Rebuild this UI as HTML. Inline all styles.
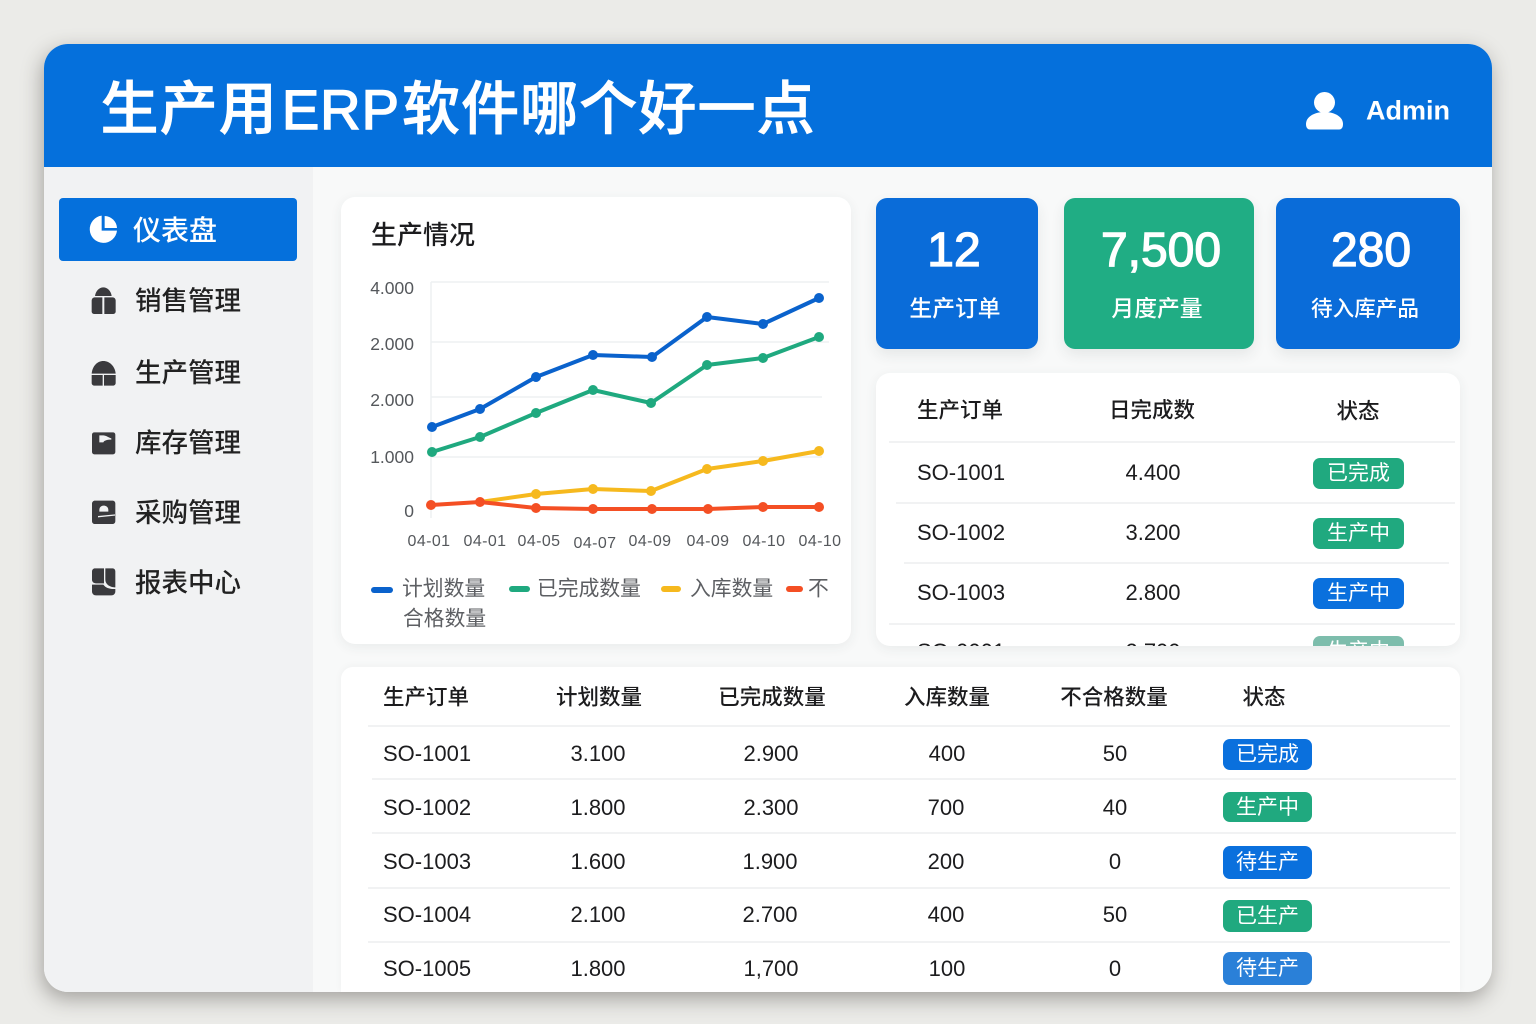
<!DOCTYPE html>
<html lang="zh-CN">
<head>
<meta charset="utf-8">
<title>生产用ERP软件哪个好一点</title>
<style>
html,body{margin:0;padding:0;width:1536px;height:1024px;overflow:hidden;background:#ebebe8}
body{position:relative;font-family:"Liberation Sans","Noto Sans CJK SC",sans-serif;color:#1c1c1e}
div,span{box-sizing:border-box}
.abs{position:absolute}
.c{position:absolute;transform:translate(-50%,-50%);white-space:nowrap;line-height:1}
.l{position:absolute;transform:translateY(-50%);white-space:nowrap;line-height:1}
.panel{position:absolute;background:#fff;border-radius:14px;box-shadow:0 3px 12px rgba(40,50,60,.07)}
.stat{position:absolute;top:198px;height:151px;border-radius:11px;color:#fff;box-shadow:0 6px 14px rgba(40,50,60,.09)}
.nav{font-size:26.500px;color:#222;font-weight:500}
.th{font-size:21.500px;color:#1c1c1e;font-weight:500}
.td{font-size:22px;color:#1c1c1e}
.ln{position:absolute;height:1.500px;background:#f1f2f3}
.b{position:absolute;color:#fff;font-size:21px;line-height:1;border-radius:7px;display:flex;align-items:center;justify-content:center;white-space:nowrap}
.gr{background:#20a97f}
.bl{background:#0a70dd}
.leg{font-size:20.800px;color:#5d5f63}
.val{-webkit-text-stroke:1.300px #fff;font-size:48px}
.sl{font-size:22.800px;font-weight:500}
</style>
</head>
<body>
<div class="abs" style="left:44px;top:44px;width:1448px;height:948px;border-radius:24px;background:#f8f9f9;box-shadow:-2px 7px 20px rgba(50,45,40,.38)"></div>
<div class="abs" style="left:44px;top:44px;width:1448px;height:948px;border-radius:24px;overflow:hidden">
  <div class="abs" style="left:0;top:0;width:1448px;height:123px;background:#0570dc"></div>
  <div class="abs" style="left:0;top:123px;width:269px;height:825px;background:#f1f2f3"></div>
</div>

<div class="l" style="left:100.500px;top:110px;color:#fff;font-size:58px;font-weight:500;letter-spacing:1.100px;-webkit-text-stroke:.8px #fff">生产用<span style="margin-left:4px;margin-right:2px;font-size:56px;font-weight:400;-webkit-text-stroke:1.500px #fff;letter-spacing:1px">ERP</span>软件哪个好一点</div>
<svg class="abs" style="left:1300px;top:85px" width="50" height="50" viewBox="0 0 50 50"><circle cx="24.500" cy="17.500" r="10.500" fill="#fff"/><path d="M6 39C6 32 14 27 24.500 27S43 32 43 39C43 42 42 44.500 39 44.500H10C7 44.500 6 42 6 39Z" fill="#fff"/></svg>
<div class="l" style="left:1366px;top:111px;color:#fff;font-size:27px;font-weight:700">Admin</div>

<!-- sidebar -->
<div class="abs" style="left:59px;top:198px;width:238px;height:63px;background:#0570dc;border-radius:4px"></div>
<svg class="abs" style="left:40px;top:180px" width="280" height="430" viewBox="0 0 840 1290">
  <path d="M185 107A41 41 0 1 0 231 152H185Z" fill="#fff"/>
  <path d="M194 108A38 38 0 0 1 231 144H194Z" fill="#fff"/>
  <g fill="#3a3a3d">
    <path d="M165 348C167 332 178 322 190 322C202 322 213 332 215 348Z"/>
    <path d="M155 362C155 356 159 352 165 352H187V402H162C158 402 155 399 155 395Z"/>
    <path d="M193 352H217C223 352 227 356 227 362V395C227 399 224 402 220 402H193Z"/>
    <path d="M155 581C157 558 172 543 190 543C208 543 225 558 227 581Z"/>
    <path d="M155 585H188V617H163C158 617 155 613 155 609Z"/>
    <path d="M192 585H227V609C227 613 224 617 219 617H192Z"/>
    <path fill-rule="evenodd" d="M163 757H219C223 757 226 760 226 764V816C226 820 223 823 219 823H163C159 823 156 820 156 816V764C156 760 159 757 163 757ZM178 766V787H190C192 782 200 779 214 779V775C205 772 197 766 190 766Z"/>
    <path fill-rule="evenodd" d="M165 962H217C223 962 226 966 226 971V1023C226 1029 222 1032 217 1032H165C160 1032 156 1029 156 1023V971C156 966 160 962 165 962ZM178 990C178 982 184 977 191 977C199 977 205 982 205 990V995H178ZM174 1012L225 1007V1003L174 1008Z"/>
    <path d="M165 1165H192V1210H168C161 1210 156 1206 156 1199V1174C156 1169 160 1165 165 1165Z"/>
    <path d="M196 1165H217C223 1165 226 1169 226 1175V1222C214 1222 196 1216 196 1198Z"/>
    <path d="M156 1214H190C197 1224 210 1228 226 1227V1234C226 1241 221 1246 214 1246H168C161 1246 156 1241 156 1234Z"/>
  </g>
</svg>
<div class="c nav" style="left:175px;top:231px;color:#fff;font-size:28px">仪表盘</div>
<div class="l nav" style="left:135px;top:301px">销售管理</div>
<div class="l nav" style="left:135px;top:373px">生产管理</div>
<div class="l nav" style="left:135px;top:443px">库存管理</div>
<div class="l nav" style="left:135px;top:513px">采购管理</div>
<div class="l nav" style="left:135px;top:583px">报表中心</div>

<!-- chart panel -->
<div class="panel" style="left:341px;top:197px;width:510px;height:447px"></div>
<div class="l" style="left:371px;top:235px;font-size:26px;font-weight:500">生产情况</div>
<svg class="abs" style="left:0;top:0" width="1536" height="1024" viewBox="0 0 1536 1024">
  <g stroke="#edf0f2" stroke-width="1.500" fill="none">
    <path d="M431 282H829M431 342H829M431 397H822M431 457H822M431 282V518"/>
  </g>
  <g fill="none" stroke-width="4" stroke-linejoin="round" stroke-linecap="round">
    <polyline stroke="#0a62cc" points="432,427 480,409 536,377 593,355 652,357 707,317 763,324 819,298"/>
    <polyline stroke="#1fa97f" points="432,452 480,437 536,413 593,390 651,403 707,365 763,358 819,337"/>
    <polyline stroke="#f6b91e" points="480,502 536,494 593,489 651,491 707,469 763,461 819,451"/>
    <polyline stroke="#f44f24" points="431,505 480,502 536,508 593,509 652,509 708,509 763,507 819,507"/>
  </g>
  <g fill="#0a62cc"><circle cx="432" cy="427" r="5"/><circle cx="480" cy="409" r="5"/><circle cx="536" cy="377" r="5"/><circle cx="593" cy="355" r="5"/><circle cx="652" cy="357" r="5"/><circle cx="707" cy="317" r="5"/><circle cx="763" cy="324" r="5"/><circle cx="819" cy="298" r="5"/></g>
  <g fill="#1fa97f"><circle cx="432" cy="452" r="5"/><circle cx="480" cy="437" r="5"/><circle cx="536" cy="413" r="5"/><circle cx="593" cy="390" r="5"/><circle cx="651" cy="403" r="5"/><circle cx="707" cy="365" r="5"/><circle cx="763" cy="358" r="5"/><circle cx="819" cy="337" r="5"/></g>
  <g fill="#f6b91e"><circle cx="536" cy="494" r="5"/><circle cx="593" cy="489" r="5"/><circle cx="651" cy="491" r="5"/><circle cx="707" cy="469" r="5"/><circle cx="763" cy="461" r="5"/><circle cx="819" cy="451" r="5"/></g>
  <g fill="#f44f24"><circle cx="431" cy="505" r="5"/><circle cx="480" cy="502" r="5"/><circle cx="536" cy="508" r="5"/><circle cx="593" cy="509" r="5"/><circle cx="652" cy="509" r="5"/><circle cx="708" cy="509" r="5"/><circle cx="763" cy="507" r="5"/><circle cx="819" cy="507" r="5"/></g>
  <g font-family="'Liberation Sans',sans-serif" font-size="17.500" fill="#55585c" text-anchor="end">
    <text x="414" y="294">4.000</text><text x="414" y="350">2.000</text><text x="414" y="406">2.000</text><text x="414" y="463">1.000</text><text x="414" y="517">0</text>
  </g>
  <g font-family="'Liberation Sans',sans-serif" font-size="16" letter-spacing=".4" fill="#55585c" text-anchor="middle">
    <text x="429" y="546">04-01</text><text x="485" y="546">04-01</text><text x="539" y="546">04-05</text><text x="595" y="548">04-07</text><text x="650" y="546">04-09</text><text x="708" y="546">04-09</text><text x="764" y="546">04-10</text><text x="820" y="546">04-10</text>
  </g>
  <g stroke-width="6" stroke-linecap="round">
    <path d="M374 590H390" stroke="#0a62cc"/><path d="M512 589H527" stroke="#1fa97f"/><path d="M664 589H678" stroke="#f6b91e"/><path d="M789 589H800" stroke="#f44f24"/>
  </g>
</svg>
<div class="l leg" style="left:402px;top:590px">计划数量</div>
<div class="l leg" style="left:537px;top:590px">已完成数量</div>
<div class="l leg" style="left:690px;top:590px">入库数量</div>
<div class="l leg" style="left:808px;top:590px">不</div>
<div class="l leg" style="left:403px;top:620px">合格数量</div>

<!-- stats -->
<div class="stat" style="left:876px;width:162px;background:#0a6cd9"></div>
<div class="stat" style="left:1064px;width:190px;background:#20ad84"></div>
<div class="stat" style="left:1276px;width:184px;background:#0a6cd9"></div>
<div class="c val" style="left:954px;top:251px;color:#fff">12</div>
<div class="c val" style="left:1161px;top:251px;color:#fff">7,500</div>
<div class="c val" style="left:1371px;top:251px;color:#fff">280</div>
<div class="c sl" style="left:955px;top:309px;color:#fff">生产订单</div>
<div class="c sl" style="left:1157px;top:309px;color:#fff">月度产量</div>
<div class="c sl" style="left:1365px;top:309px;color:#fff;font-size:21.600px">待入库产品</div>

<!-- right table -->
<div class="panel" style="left:876px;top:373px;width:584px;height:273px;overflow:hidden">
  <div class="ln" style="left:13px;top:68px;width:566px"></div>
  <div class="ln" style="left:20px;top:129px;width:559px"></div>
  <div class="ln" style="left:28px;top:189px;width:545px"></div>
  <div class="ln" style="left:13px;top:250px;width:566px"></div>
  <div class="l td" style="left:41px;top:279px">SO-0001</div>
  <div class="c td" style="left:277px;top:279px">2.700</div>
  <div class="b" style="left:437px;top:263px;width:91px;height:31px;background:#7dbdac">生产中</div>
</div>
<div class="l th" style="left:917px;top:411px">生产订单</div>
<div class="c th" style="left:1152px;top:411px">日完成数</div>
<div class="c th" style="left:1358px;top:412px">状态</div>
<div class="l td" style="left:917px;top:473px">SO-1001</div>
<div class="c td" style="left:1153px;top:473px">4.400</div>
<div class="b gr" style="left:1313px;top:458px;width:91px;height:31px">已完成</div>
<div class="l td" style="left:917px;top:533px">SO-1002</div>
<div class="c td" style="left:1153px;top:533px">3.200</div>
<div class="b gr" style="left:1313px;top:518px;width:91px;height:31px">生产中</div>
<div class="l td" style="left:917px;top:593px">SO-1003</div>
<div class="c td" style="left:1153px;top:593px">2.800</div>
<div class="b bl" style="left:1313px;top:578px;width:91px;height:31px">生产中</div>

<!-- lower table -->
<div class="abs" style="left:341px;top:667px;width:1119px;height:325px;background:#fff;border-radius:12px 12px 0 0;box-shadow:0 -1px 8px rgba(40,50,60,.04)"></div>
<div class="ln" style="left:368px;top:725px;width:1082px"></div>
<div class="ln" style="left:372px;top:778px;width:1084px"></div>
<div class="ln" style="left:372px;top:832px;width:1084px"></div>
<div class="ln" style="left:368px;top:887px;width:1082px"></div>
<div class="ln" style="left:368px;top:941px;width:1082px"></div>

<div class="l th" style="left:383px;top:698px">生产订单</div>
<div class="c th" style="left:599px;top:698px">计划数量</div>
<div class="c th" style="left:772px;top:698px">已完成数量</div>
<div class="c th" style="left:947px;top:698px">入库数量</div>
<div class="c th" style="left:1114px;top:698px">不合格数量</div>
<div class="c th" style="left:1264px;top:698px">状态</div>

<div class="l td" style="left:383px;top:754px">SO-1001</div><div class="c td" style="left:598px;top:754px">3.100</div><div class="c td" style="left:771px;top:754px">2.900</div><div class="c td" style="left:947px;top:754px">400</div><div class="c td" style="left:1115px;top:754px">50</div>
<div class="b bl" style="left:1223px;top:739px;width:89px;height:31px">已完成</div>
<div class="l td" style="left:383px;top:808px">SO-1002</div><div class="c td" style="left:598px;top:808px">1.800</div><div class="c td" style="left:771px;top:808px">2.300</div><div class="c td" style="left:946px;top:808px">700</div><div class="c td" style="left:1115px;top:808px">40</div>
<div class="b gr" style="left:1223px;top:792px;width:89px;height:30px">生产中</div>
<div class="l td" style="left:383px;top:862px">SO-1003</div><div class="c td" style="left:598px;top:862px">1.600</div><div class="c td" style="left:770px;top:862px">1.900</div><div class="c td" style="left:946px;top:862px">200</div><div class="c td" style="left:1115px;top:862px">0</div>
<div class="b bl" style="left:1223px;top:846px;width:89px;height:33px">待生产</div>
<div class="l td" style="left:383px;top:915px">SO-1004</div><div class="c td" style="left:598px;top:915px">2.100</div><div class="c td" style="left:770px;top:915px">2.700</div><div class="c td" style="left:946px;top:915px">400</div><div class="c td" style="left:1115px;top:915px">50</div>
<div class="b gr" style="left:1223px;top:900px;width:89px;height:32px">已生产</div>
<div class="l td" style="left:383px;top:969px">SO-1005</div><div class="c td" style="left:598px;top:969px">1.800</div><div class="c td" style="left:771px;top:969px">1,700</div><div class="c td" style="left:947px;top:969px">100</div><div class="c td" style="left:1115px;top:969px">0</div>
<div class="b" style="left:1223px;top:952px;width:89px;height:33px;background:#2a80d8">待生产</div>
</body>
</html>
